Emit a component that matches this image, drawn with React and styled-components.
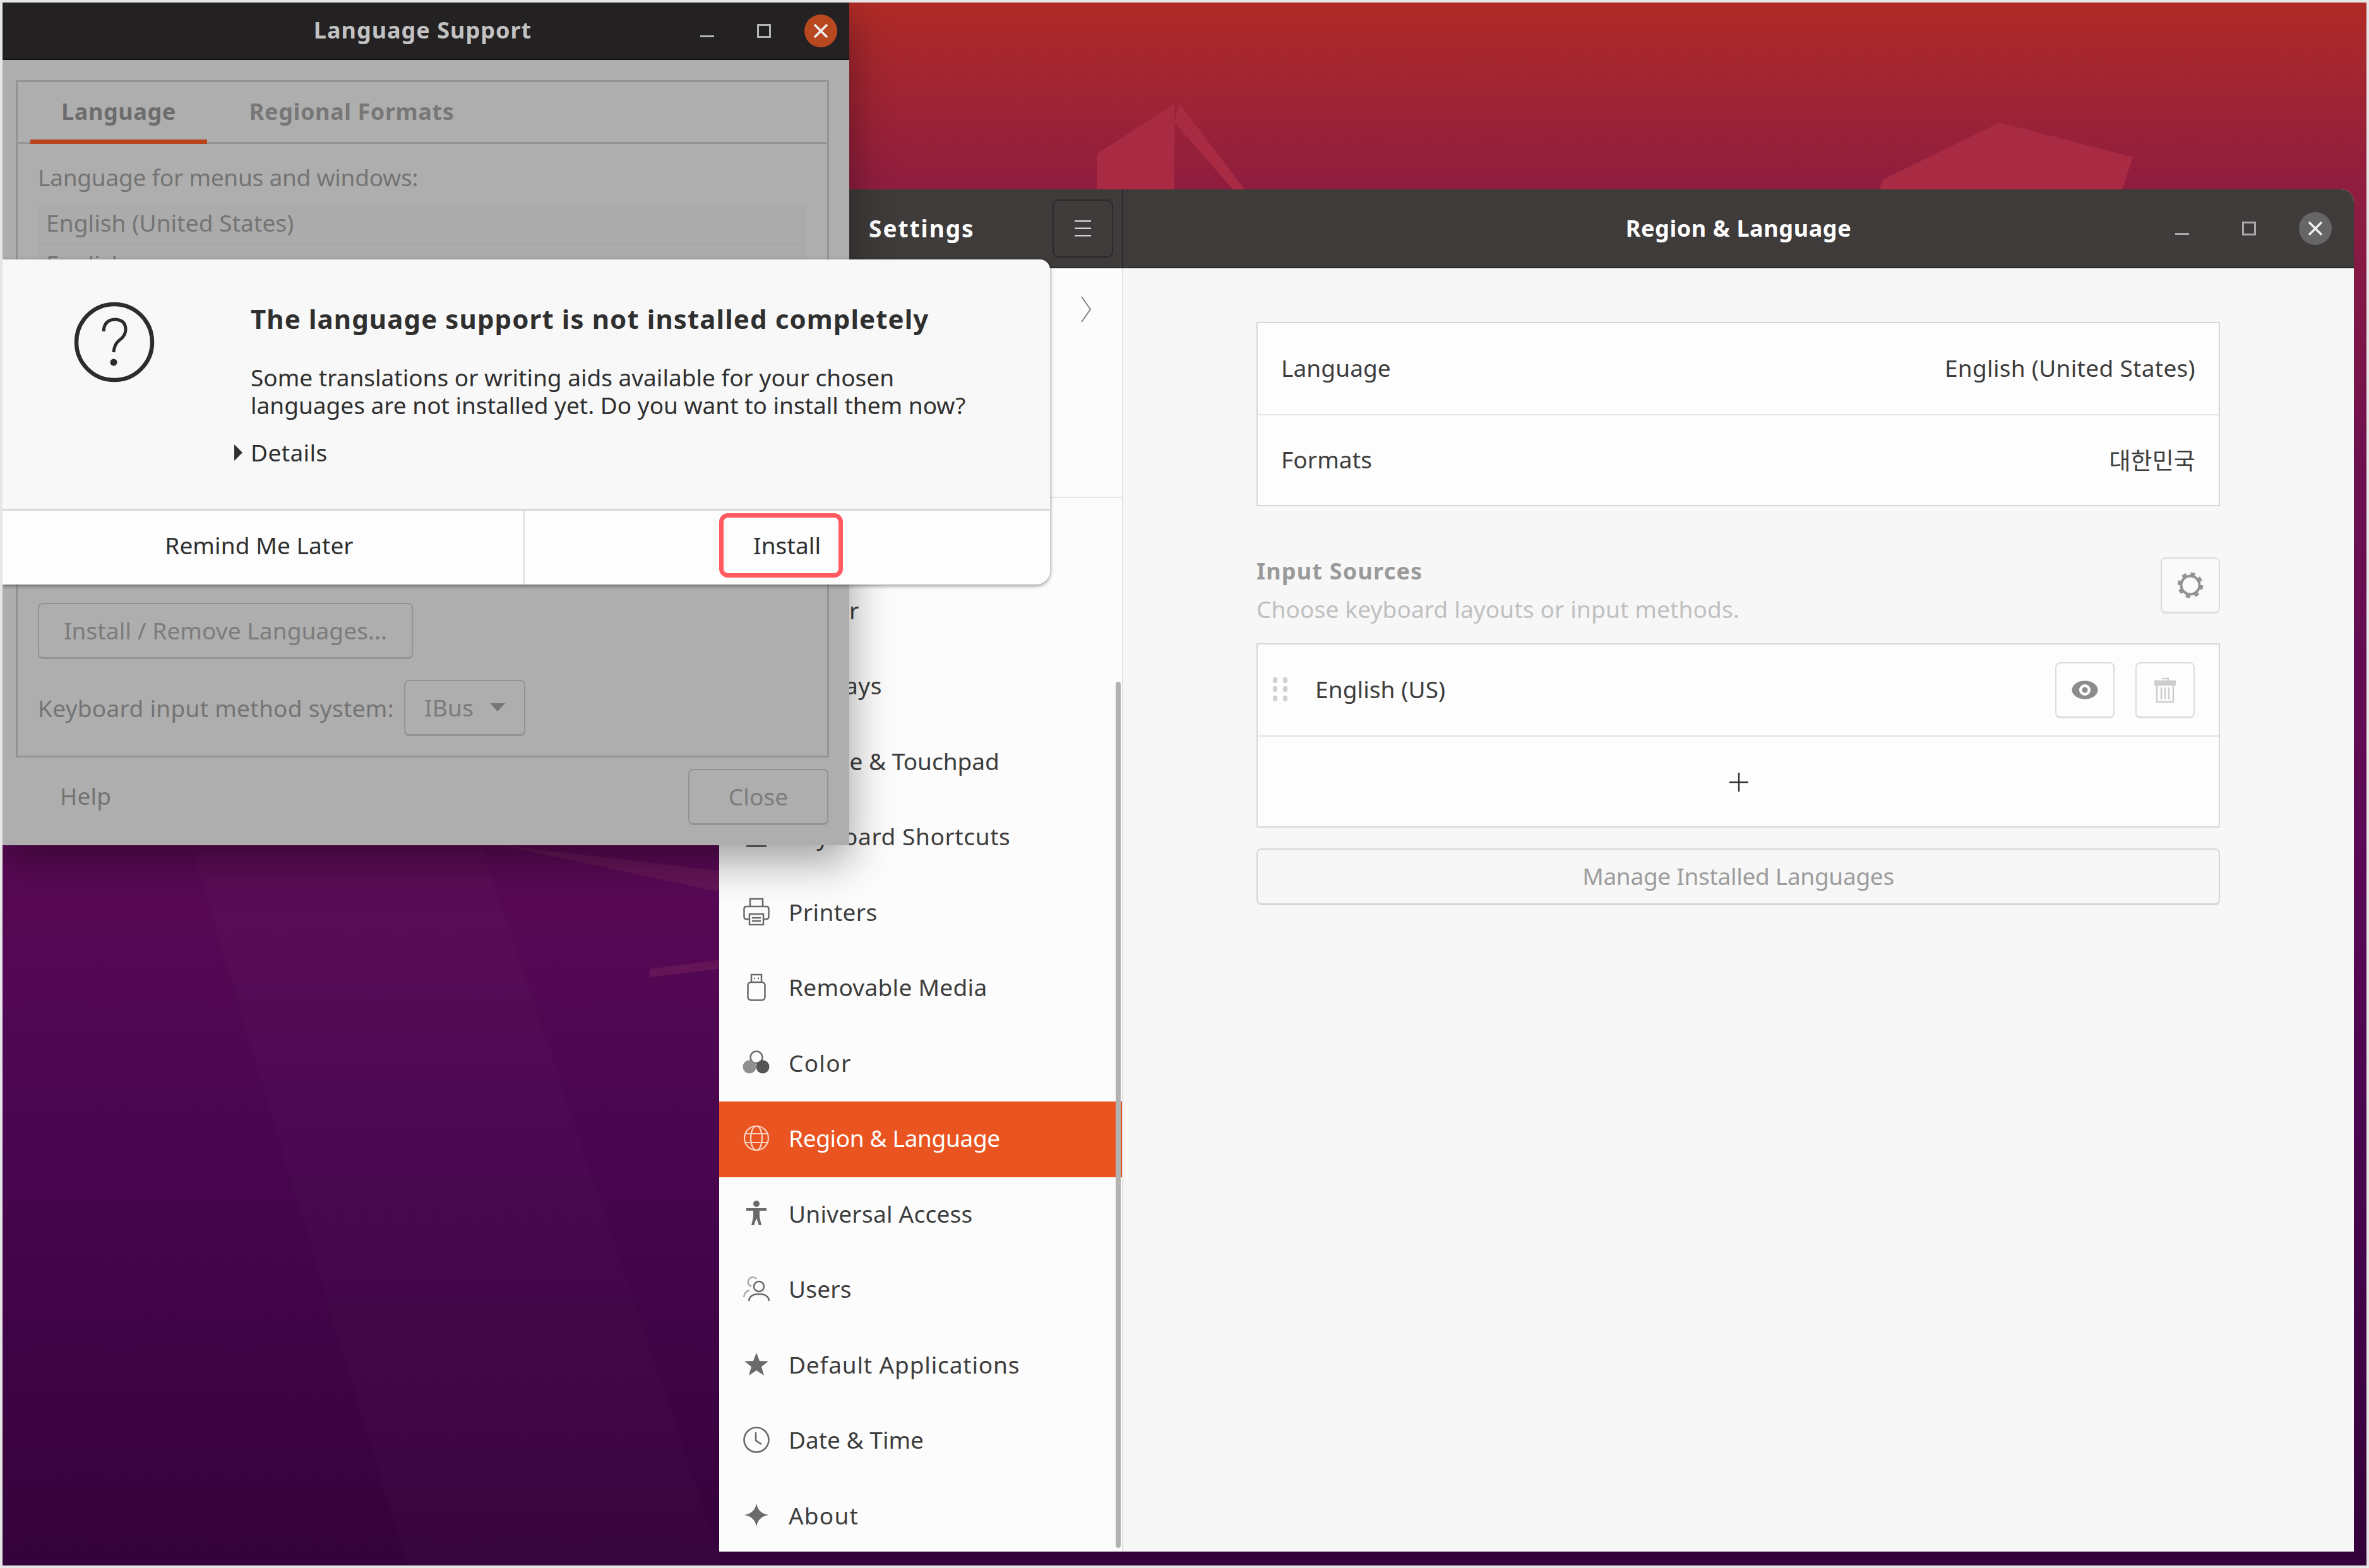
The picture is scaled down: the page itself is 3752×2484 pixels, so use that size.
import React from 'react';
import styled, { createGlobalStyle } from 'styled-components';

const FONT = '"Noto Sans", "Noto Sans CJK KR", sans-serif';

const GlobalStyle = createGlobalStyle`
  html, body {
    margin: 0;
    padding: 0;
    background: #e6e6e6;
  }
  * {
    box-sizing: border-box;
  }
`;

const Page = styled.div`
  width: 3752px;
  height: 2484px;
  padding: 4px;
  background: #e6e6e6;
  font-family: ${FONT};
  font-size: 37px;
  letter-spacing: 0.1px;
  color: #3d3d3d;
  overflow: hidden;
`;

const Desktop = styled.div`
  position: relative;
  width: 100%;
  height: 100%;
  overflow: hidden;
  background: linear-gradient(180deg, #b02b26 0%, #8f1d40 12%, #6d1050 30%, #5a0955 55%, #4a0650 72%, #34023a 100%);
`;

const Wallpaper = styled.svg`
  position: absolute;
  inset: 0;
`;

const SettingsWindow = styled.div`
  position: absolute;
  left: 1135px;
  top: 296px;
  width: 2589px;
  height: 2158px;
  display: flex;
  flex-direction: column;
  border-radius: 20px 20px 0 0;
  overflow: hidden;
  background: #f7f7f7;
`;

const HeaderRow = styled.div`
  flex: none;
  height: 125px;
  display: flex;
  background: #3f3b3b;
  border-bottom: 2px solid #2c2a2a;
  color: #fff;
  font-weight: 700;
`;

const HeaderLeft = styled.div`
  flex: none;
  width: 640px;
  display: flex;
  align-items: center;
  justify-content: space-between;
  padding: 0 14px 0 237px;
  border-right: 2px solid #2c2a2a;
`;

const SettingsTitle = styled.span`
  letter-spacing: 2px;
`;

const HeaderRight = styled.div`
  flex: 1;
  display: grid;
  grid-template-columns: 1fr auto 1fr;
  align-items: center;
`;

const HeaderTitle = styled.div`
  grid-column: 2;
  font-size: 36px;
  letter-spacing: 0.6px;
`;

const MenuButton = styled.div`
  width: 96px;
  height: 92px;
  display: flex;
  align-items: center;
  justify-content: center;
  border: 2px solid #2b2929;
  border-radius: 9px;
`;

const WindowButtons = styled.div`
  display: flex;
  align-items: center;
  justify-content: flex-end;
  padding-right: ${p => p.$padRight}px;
  grid-column: 3;
`;

const WindowButton = styled.div`
  width: ${p => p.$size}px;
  height: 60px;
  display: flex;
  align-items: center;
  justify-content: center;
`;

const CloseDisc = styled.div`
  width: 52px;
  height: 52px;
  border-radius: 50%;
  background: ${p => p.$color};
  display: flex;
  align-items: center;
  justify-content: center;
`;

const SettingsBody = styled.div`
  flex: 1;
  min-height: 0;
  display: flex;
`;

const Sidebar = styled.div`
  position: relative;
  flex: none;
  width: 640px;
  background: #fcfcfc;
  border-right: 2px solid #e2e2e2;
  overflow: hidden;
`;

const ChevronRow = styled.div`
  height: 364px;
  margin-bottom: 119.5px;
  border-bottom: 2px solid #e4e4e4;
  display: flex;
  justify-content: flex-end;
  padding: 44px 48px 0 0;
`;

const SideRow = styled.div`
  height: 119.5px;
  display: flex;
  align-items: center;
  padding: 0 0 4px 37px;
  letter-spacing: ${p => p.$spacing}px;
  background: ${p => (p.$active ? '#e95420' : 'transparent')};
  color: ${p => (p.$active ? '#fff' : '#3d3d3d')};
`;

const SideIcon = styled.div`
  width: 44px;
  height: 44px;
  margin-right: 29px;
  display: flex;
  align-items: center;
  justify-content: center;
  color: ${p => (p.$active ? '#fbd3c3' : '#6a6a6a')};
`;

const ScrollThumb = styled.div`
  position: absolute;
  right: 2px;
  top: 655px;
  bottom: 6px;
  width: 8px;
  border-radius: 4px;
  background: #b2b2b2;
`;

const Main = styled.div`
  flex: 1;
  padding: 85px 212px 0 211px;
  background: #f7f7f7;
  display: flex;
  flex-direction: column;
`;

const ListBox = styled.div`
  background: #fdfdfd;
  border: 2px solid #d8d8d8;
`;

const InfoRow = styled.div`
  height: ${p => p.$height}px;
  display: flex;
  align-items: center;
  justify-content: space-between;
  padding: 0 ${p => p.$padRight ?? 37}px 3px ${p => p.$padLeft ?? 37}px;
  border-top: ${p => (p.$divided ? '2px solid #e4e4e4' : 'none')};
`;

const EnglishValue = styled.span`
  letter-spacing: 0.3px;
`;

const SectionHead = styled.div`
  display: flex;
  justify-content: space-between;
  margin-top: 81px;
  height: 89px;
`;

const SectionTitle = styled.div`
  font-weight: 700;
  font-size: 36px;
  letter-spacing: 1.2px;
  color: #9a9a9a;
  line-height: 50px;
  margin-top: -3px;
`;

const SectionHint = styled.div`
  color: #c0c0c0;
  line-height: 50px;
  margin-top: 10px;
  letter-spacing: 0.15px;
`;

const IconButton = styled.div`
  flex: none;
  width: 94px;
  height: ${p => p.$height}px;
  display: flex;
  align-items: center;
  justify-content: center;
  background: ${p => p.$bg || '#fafafa'};
  border: 2px solid #dcdcdc;
  border-bottom-width: 3px;
  border-radius: 8px;
`;

const SourceList = styled(ListBox)`
  margin-top: 47px;
`;

const DragHandle = styled.div`
  width: 24px;
  height: 38px;
  margin-right: 43px;
  display: grid;
  grid-template-columns: 8px 8px;
  justify-content: space-between;
  align-content: space-between;
`;

const DragDot = styled.span`
  width: 7px;
  height: 9px;
  border-radius: 3px;
  background: #d0d0d0;
`;

const SourceName = styled.div`
  flex: 1;
`;

const RowActions = styled.div`
  display: flex;
  gap: 33px;
  margin-top: 3px;
`;

const AddRow = styled(InfoRow)`
  justify-content: center;
  padding: 2px 0 0 2px;
`;

const ManageButton = styled.div`
  margin-top: 33px;
  height: 90px;
  display: flex;
  align-items: center;
  justify-content: center;
  padding-bottom: 2px;
  letter-spacing: -0.3px;
  color: #9c9c9c;
  background: #f7f7f7;
  border: 2px solid #d6d6d6;
  border-bottom-width: 3px;
  border-radius: 8px;
`;

const LanguageWindow = styled.div`
  position: absolute;
  left: 0;
  top: 0;
  width: 1341px;
  height: 1335px;
  display: flex;
  flex-direction: column;
  background: #aeaeae;
  color: #747474;
  box-shadow: 0 24px 64px rgba(0, 0, 0, 0.38);
`;

const LanguageTitleBar = styled.div`
  flex: none;
  height: 91px;
  display: grid;
  grid-template-columns: 1fr auto 1fr;
  align-items: center;
  background: #232122;
  border-bottom: 2px solid #141414;
`;

const LanguageTitle = styled.div`
  grid-column: 2;
  font-weight: 700;
  font-size: 36px;
  color: #c2c2c2;
  letter-spacing: 1px;
  margin: -3px 10px 0 0;
`;

const Notebook = styled.div`
  flex: none;
  height: 1073px;
  margin: 32px 32px 0 21px;
  display: flex;
  flex-direction: column;
  border: 3px solid #939393;
`;

const TabBar = styled.div`
  flex: none;
  height: 98px;
  display: flex;
  gap: 18px;
  align-items: stretch;
  padding-left: 20px;
  border-bottom: 3px solid #939393;
`;

const Tab = styled.div`
  display: flex;
  align-items: center;
  font-weight: 700;
  font-size: 36px;
  letter-spacing: 0.6px;
  padding: 2px 49px 0;
  margin-bottom: -3px;
  color: ${p => (p.$active ? '#6c6c6c' : '#777')};
  border-bottom: 7px solid ${p => (p.$active ? '#b8431c' : 'transparent')};
`;

const NotebookBody = styled.div`
  flex: 1;
  min-height: 0;
  display: flex;
  flex-direction: column;
  padding: 32px 33px 31px 32px;
`;

const NotebookLabel = styled.div`
  line-height: 42px;
  letter-spacing: -0.25px;
`;

const LanguageList = styled.div`
  flex: 1;
  min-height: 0;
  margin-top: 20px;
  margin-bottom: 28px;
  overflow: hidden;
  background: #ababab;
`;

const LanguageRow = styled.div`
  height: 65px;
  padding: 0 0 3px 13px;
  display: flex;
  align-items: center;
  border-bottom: 2px solid #a6a6a6;
`;

const DimButton = styled.div`
  display: inline-flex;
  align-items: center;
  justify-content: ${p => p.$justify || 'center'};
  align-self: flex-start;
  flex: none;
  height: 89px;
  width: ${p => p.$width}px;
  padding: 0 ${p => p.$pad || 0}px 2px;
  border: 2px solid #939393;
  border-bottom-width: 3px;
  border-radius: 8px;
  color: #7c7c7c;
`;

const MethodRow = styled.div`
  flex: none;
  margin-top: 33px;
  display: flex;
  align-items: center;
  gap: 16px;
  letter-spacing: 0.3px;
`;

const ComboCaret = styled.span`
  width: 0;
  height: 0;
  border-left: 12px solid transparent;
  border-right: 12px solid transparent;
  border-top: 13px solid #777;
`;

const LanguageFooter = styled.div`
  flex: 1;
  display: flex;
  justify-content: space-between;
  align-items: flex-start;
  padding: 18px 33px 0 91px;
`;

const HelpLabel = styled.div`
  line-height: 86px;
`;

const Dialog = styled.div`
  position: absolute;
  left: 0;
  top: 407px;
  width: 1659px;
  height: 515px;
  display: flex;
  flex-direction: column;
  overflow: hidden;
  background: #f8f8f8;
  border-radius: 0 16px 22px 0;
  box-shadow: 0 2px 6px rgba(0, 0, 0, 0.45);
  color: #2f2f2f;
`;

const DialogBody = styled.div`
  flex: 1;
  display: flex;
  padding: 70px 0 0 113px;
`;

const DialogIcon = styled.div`
  flex: none;
  width: 128px;
  height: 128px;
  margin: -3px 152px 0 0;
`;

const DialogText = styled.div`
  display: flex;
  flex-direction: column;
`;

const DialogTitle = styled.div`
  font-size: 42px;
  letter-spacing: 1.1px;
  font-weight: 700;
  line-height: 48px;
  margin-bottom: 47px;
`;

const DialogMessage = styled.div`
  line-height: 44px;
  letter-spacing: 0;
`;

const DetailsRow = styled.div`
  display: flex;
  align-items: center;
  gap: 13px;
  margin: 31px 0 0 -26px;
  line-height: 44px;
  letter-spacing: 0.4px;
`;

const DetailsCaret = styled.span`
  width: 0;
  height: 0;
  border-top: 13px solid transparent;
  border-bottom: 13px solid transparent;
  border-left: 13px solid #2f2f2f;
`;

const DialogActions = styled.div`
  flex: none;
  height: 120px;
  display: grid;
  grid-template-columns: 825px 1fr;
  background: #fdfdfd;
  border-top: 3px solid #d8d8d8;
`;

const DialogAction = styled.div`
  display: flex;
  align-items: center;
  justify-content: center;
  padding: 0 ${p => p.$shift || 0}px 8px 0;
  border-left: ${p => (p.$divided ? '2px solid #dcdcdc' : 'none')};
`;

const Highlight = styled.div`
  width: 196px;
  height: 102px;
  display: flex;
  align-items: center;
  padding-left: 47px;
  border: 7px solid #ff5a5f;
  border-radius: 14px;
`;

const Glyph = styled.svg`
  display: block;
  flex: none;
`;

const WIN_MIN = (
  <Glyph width="24" height="24" viewBox="0 0 24 24">
    <rect x="1" y="19" width="22" height="3" fill="currentColor" />
  </Glyph>
);

const WIN_MAX = (
  <Glyph width="24" height="24" viewBox="0 0 24 24">
    <rect x="2.5" y="2.5" width="19" height="19" fill="none" stroke="currentColor" strokeWidth="3" />
  </Glyph>
);

const WIN_CLOSE = (
  <Glyph width="26" height="26" viewBox="0 0 26 26">
    <path d="M3 3 L23 23 M23 3 L3 23" fill="none" stroke="#f2f2f2" strokeWidth="3.5" />
  </Glyph>
);

const PrinterIcon = () => (
  <Glyph width="42" height="44" viewBox="0 0 42 44" fill="none" stroke="currentColor" strokeWidth="2.5">
    <path d="M11 14 V2 H31 V14" />
    <path d="M9 34 H5 Q1.5 34 1.5 30 V18 Q1.5 14 5 14 H37 Q40.5 14 40.5 18 V30 Q40.5 34 37 34 H33" />
    <rect x="10" y="26" width="22" height="17" />
    <path d="M14 32 H28 M14 37 H28" />
  </Glyph>
);

const UsbIcon = () => (
  <Glyph width="30" height="44" viewBox="0 0 30 44" fill="none" stroke="currentColor" strokeWidth="2.5">
    <path d="M7 14 V2 H23 V14" />
    <path d="M11 8 H13 M17 8 H19" />
    <rect x="1.5" y="14" width="27" height="28.5" rx="5" />
  </Glyph>
);

const ColorIcon = () => (
  <Glyph width="44" height="40" viewBox="0 0 44 40">
    <circle cx="22" cy="12" r="9.5" fill="none" stroke="currentColor" strokeWidth="2.5" />
    <circle cx="11" cy="27" r="10.5" fill="#909090" />
    <circle cx="32" cy="27" r="10.5" fill="#555" />
  </Glyph>
);

const GlobeIcon = () => (
  <Glyph width="42" height="42" viewBox="0 0 42 42" fill="none" stroke="currentColor" strokeWidth="2.2">
    <circle cx="21" cy="21" r="19" />
    <ellipse cx="21" cy="21" rx="9" ry="19" />
    <path d="M3 14 H39 M3 28 H39" />
  </Glyph>
);

const AccessIcon = () => (
  <Glyph width="34" height="40" viewBox="0 0 34 40" fill="currentColor">
    <circle cx="17" cy="5" r="5" />
    <path d="M1 12 H33 V16 H22 V26 L25 39 H21 L17 28 L13 39 H9 L12 26 V16 H1 Z" />
  </Glyph>
);

const UsersIcon = () => (
  <Glyph width="44" height="42" viewBox="0 0 44 42" fill="none" strokeWidth="2.4">
    <path d="M14 17 A7.5 7.5 0 1 1 22 5 M2 34 Q3 25 11 23" stroke="#a8a8a8" />
    <circle cx="26" cy="17" r="8" stroke="#666" />
    <path d="M10 40 Q11 29 26 29 Q41 29 42 40" stroke="#666" />
  </Glyph>
);

const StarIcon = () => (
  <Glyph width="38" height="36" viewBox="0 0 38 36" fill="currentColor">
    <path d="M19 0 L24 13 L38 13.5 L27 22 L31 36 L19 28 L7 36 L11 22 L0 13.5 L14 13 Z" />
  </Glyph>
);

const ClockIcon = () => (
  <Glyph width="42" height="42" viewBox="0 0 42 42" fill="none" stroke="currentColor" strokeWidth="2.6">
    <circle cx="21" cy="21" r="19.5" />
    <path d="M20 9 V22 L29 28" />
  </Glyph>
);

const AboutIcon = () => (
  <Glyph width="38" height="38" viewBox="0 0 38 38" fill="currentColor">
    <path d="M19 0 Q21 16 38 19 Q21 22 19 38 Q17 22 0 19 Q17 16 19 0 Z" />
  </Glyph>
);

const KeyboardIcon = () => (
  <Glyph width="36" height="38" viewBox="0 0 36 38">
    <rect x="2" y="28" width="32" height="8" fill="currentColor" />
  </Glyph>
);

const MenuIcon = () => (
  <Glyph width="28" height="28" viewBox="0 0 28 28" fill="#d0d0d0">
    <rect x="1" y="1" width="26" height="2.5" />
    <rect x="1" y="12.5" width="26" height="2.5" />
    <rect x="1" y="24" width="26" height="2.5" />
  </Glyph>
);

const ChevronIcon = () => (
  <Glyph width="18" height="42" viewBox="0 0 18 42" fill="none" stroke="#808080" strokeWidth="2">
    <path d="M2 1 L16 21 L2 41" />
  </Glyph>
);

const GearIcon = () => (
  <Glyph width="44" height="44" viewBox="0 0 44 44" fill="none" stroke="#929292">
    <circle cx="22" cy="22" r="14.5" strokeWidth="4" />
    <circle cx="22" cy="22" r="18" strokeWidth="4.5" strokeDasharray="7 7.14" />
  </Glyph>
);

const EyeIcon = () => (
  <Glyph width="42" height="30" viewBox="0 0 42 30">
    <ellipse cx="21" cy="15" rx="20.5" ry="14.5" fill="#8c8c8c" />
    <circle cx="21" cy="15" r="9" fill="#fdfdfd" />
    <circle cx="21" cy="15" r="4.5" fill="#8c8c8c" />
  </Glyph>
);

const TrashIcon = () => (
  <Glyph width="34" height="42" viewBox="0 0 34 42" fill="none" stroke="#cdcdcd" strokeWidth="2.4">
    <path d="M12 3 H22 V8" />
    <rect x="1" y="7" width="32" height="6" fill="#cdcdcd" />
    <path d="M4 14 V40 H30 V14 M11 17 V36 M17 17 V36 M23 17 V36" />
  </Glyph>
);

const PlusIcon = () => (
  <Glyph width="30" height="30" viewBox="0 0 30 30" fill="#2e2e2e">
    <rect x="0" y="14" width="30" height="2.4" />
    <rect x="13.8" y="0" width="2.4" height="30" />
  </Glyph>
);

const QuestionIcon = () => (
  <Glyph width="128" height="128" viewBox="0 0 128 128" fill="none" stroke="#2c2c2c">
    <circle cx="64" cy="64" r="60" strokeWidth="6.5" />
    <path d="M47 47 Q48 28 66 28 Q82 29 82 44 Q82 54 72 61 Q64 67 63 80" strokeWidth="5" />
    <circle cx="63" cy="96" r="5.5" fill="#2c2c2c" stroke="none" />
  </Glyph>
);

const SIDE_ITEMS = [
  { label: 'Power', spacing: 0.5 },
  { label: 'Displays', spacing: 0.5 },
  { label: 'Mouse & Touchpad', spacing: 0 },
  { label: 'Keyboard Shortcuts', icon: KeyboardIcon, spacing: 0.6 },
  { label: 'Printers', icon: PrinterIcon, spacing: 0.4 },
  { label: 'Removable Media', icon: UsbIcon, spacing: 0.3 },
  { label: 'Color', icon: ColorIcon, spacing: 1.3 },
  { label: 'Region & Language', icon: GlobeIcon, active: true, spacing: -0.35 },
  { label: 'Universal Access', icon: AccessIcon, spacing: 0.25 },
  { label: 'Users', icon: UsersIcon, spacing: 0.2 },
  { label: 'Default Applications', icon: StarIcon, spacing: 0.85 },
  { label: 'Date & Time', icon: ClockIcon, spacing: 0 },
  { label: 'About', icon: AboutIcon, spacing: 1.2 },
];

const Controls = ({ size, padRight, closeColor, color }) => (
  <WindowButtons $padRight={padRight} style={{ color }}>
    <WindowButton $size={size}>{WIN_MIN}</WindowButton>
    <WindowButton $size={size}>{WIN_MAX}</WindowButton>
    <WindowButton $size={size}>
      <CloseDisc $color={closeColor}>{WIN_CLOSE}</CloseDisc>
    </WindowButton>
  </WindowButtons>
);

const App = () => (
  <Page>
    <GlobalStyle />
    <Desktop>
      <Wallpaper width="3744" height="2476" viewBox="0 0 3744 2476">
        <g fill="#a92a43">
          <path d="M1733 240 L1856 160 L1856 300 L1733 300 Z" />
          <path d="M1856 190 L1864 160 L1970 300 L1952 300 Z" />
          <path d="M3163 190 L3374 245 L3356 300 L2970 300 L2979 280 Z" />
        </g>
        <g fill="#641558">
          <path d="M790 1335 L1140 1376 L1140 1410 Z" />
          <path d="M1025 1531 L1140 1516 L1140 1530 L1025 1544 Z" />
        </g>
        <g fill="#fff" opacity="0.014">
          <path d="M300 1340 L640 2476 L1140 2476 L760 1340 Z" />
        </g>
      </Wallpaper>

      <SettingsWindow>
        <HeaderRow>
          <HeaderLeft>
            <SettingsTitle>Settings</SettingsTitle>
            <MenuButton><MenuIcon /></MenuButton>
          </HeaderLeft>
          <HeaderRight>
            <HeaderTitle>Region &amp; Language</HeaderTitle>
            <Controls size={105.5} padRight={8} closeColor="#666" color="#aaa" />
          </HeaderRight>
        </HeaderRow>
        <SettingsBody>
          <Sidebar>
            <ChevronRow><ChevronIcon /></ChevronRow>
            {SIDE_ITEMS.map(({ label, icon: Icon, active, spacing }) => (
              <SideRow key={label} $active={active} $spacing={spacing}>
                <SideIcon $active={active}>{Icon ? <Icon /> : null}</SideIcon>
                {label}
              </SideRow>
            ))}
            <ScrollThumb />
          </Sidebar>
          <Main>
            <ListBox>
              <InfoRow $height={144}>
                <span>Language</span>
                <EnglishValue>English (United States)</EnglishValue>
              </InfoRow>
              <InfoRow $height={144} $divided>
                <span>Formats</span>
                <span>대한민국</span>
              </InfoRow>
            </ListBox>
            <SectionHead>
              <div>
                <SectionTitle>Input Sources</SectionTitle>
                <SectionHint>Choose keyboard layouts or input methods.</SectionHint>
              </div>
              <IconButton $height={89}><GearIcon /></IconButton>
            </SectionHead>
            <SourceList>
              <InfoRow $height={144} $padLeft={24} $padRight={38}>
                <DragHandle>
                  {[0, 1, 2, 3, 4, 5].map(i => <DragDot key={i} />)}
                </DragHandle>
                <SourceName>English (US)</SourceName>
                <RowActions>
                  <IconButton $height={89} $bg="#fdfdfd"><EyeIcon /></IconButton>
                  <IconButton $height={89} $bg="#fdfdfd"><TrashIcon /></IconButton>
                </RowActions>
              </InfoRow>
              <AddRow $height={144} $divided><PlusIcon /></AddRow>
            </SourceList>
            <ManageButton>Manage Installed Languages</ManageButton>
          </Main>
        </SettingsBody>
      </SettingsWindow>

      <LanguageWindow>
        <LanguageTitleBar>
          <LanguageTitle>Language Support</LanguageTitle>
          <Controls size={90} padRight={0} closeColor="#b8481f" color="#b4b4b4" />
        </LanguageTitleBar>
        <Notebook>
          <TabBar>
            <Tab $active>Language</Tab>
            <Tab>Regional Formats</Tab>
          </TabBar>
          <NotebookBody>
            <NotebookLabel>Language for menus and windows:</NotebookLabel>
            <LanguageList>
              <LanguageRow>English (United States)</LanguageRow>
              <LanguageRow>English</LanguageRow>
            </LanguageList>
            <DimButton $width={594}>Install / Remove Languages...</DimButton>
            <MethodRow>
              <span>Keyboard input method system:</span>
              <DimButton $width={192} $justify="space-between" $pad={30}>
                IBus
                <ComboCaret />
              </DimButton>
            </MethodRow>
          </NotebookBody>
        </Notebook>
        <LanguageFooter>
          <HelpLabel>Help</HelpLabel>
          <DimButton $width={222}>Close</DimButton>
        </LanguageFooter>
      </LanguageWindow>

      <Dialog>
        <DialogBody>
          <DialogIcon><QuestionIcon /></DialogIcon>
          <DialogText>
            <DialogTitle>The language support is not installed completely</DialogTitle>
            <DialogMessage>
              Some translations or writing aids available for your chosen<br />
              languages are not installed yet. Do you want to install them now?
            </DialogMessage>
            <DetailsRow>
              <DetailsCaret />
              Details
            </DetailsRow>
          </DialogText>
        </DialogBody>
        <DialogActions>
          <DialogAction $shift={12}>Remind Me Later</DialogAction>
          <DialogAction $divided $shift={20}>
            <Highlight>Install</Highlight>
          </DialogAction>
        </DialogActions>
      </Dialog>
    </Desktop>
  </Page>
);

export default App;
